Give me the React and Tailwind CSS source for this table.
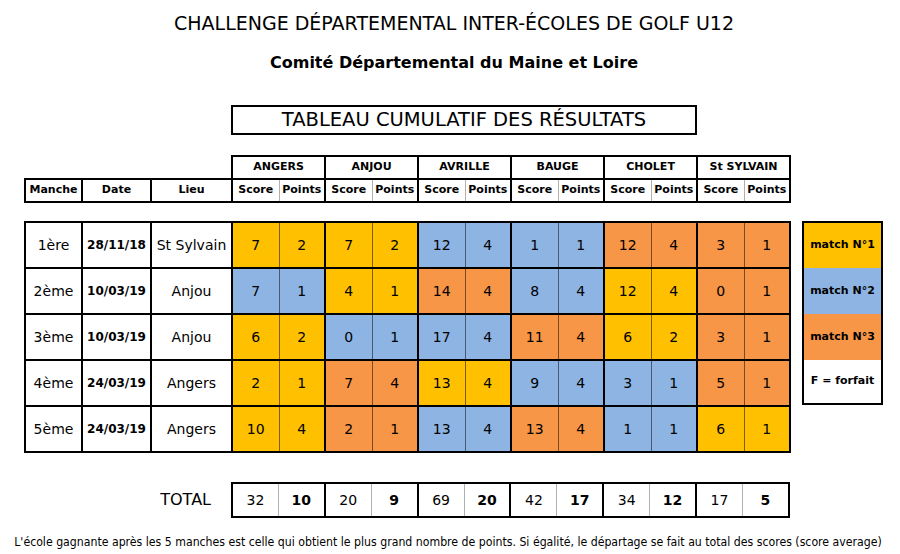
import React from "react";

const Y = "bg-[#FFC000]";
const B = "bg-[#8DB4E2]";
const O = "bg-[#F79646]";

const schools = ["ANGERS", "ANJOU", "AVRILLE", "BAUGE", "CHOLET", "St SYLVAIN"];

const rows = [
  { m: "1ère", d: "28/11/18", l: "St Sylvain", c: [[7, 2, Y], [7, 2, Y], [12, 4, B], [1, 1, B], [12, 4, O], [3, 1, O]] },
  { m: "2ème", d: "10/03/19", l: "Anjou", c: [[7, 1, B], [4, 1, Y], [14, 4, O], [8, 4, B], [12, 4, Y], [0, 1, O]] },
  { m: "3ème", d: "10/03/19", l: "Anjou", c: [[6, 2, Y], [0, 1, B], [17, 4, B], [11, 4, O], [6, 2, Y], [3, 1, O]] },
  { m: "4ème", d: "24/03/19", l: "Angers", c: [[2, 1, Y], [7, 4, O], [13, 4, Y], [9, 4, B], [3, 1, B], [5, 1, O]] },
  { m: "5ème", d: "24/03/19", l: "Angers", c: [[10, 4, Y], [2, 1, O], [13, 4, B], [13, 4, O], [1, 1, B], [6, 1, Y]] },
];

const totals = [[32, 10], [20, 9], [69, 20], [42, 17], [34, 12], [17, 5]];

function Cols() {
  return (
    <colgroup>
      <col className="w-[57px]" />
      <col className="w-[69px]" />
      <col className="w-[81px]" />
      {schools.map((s) => (
        <React.Fragment key={s}>
          <col className="w-[47px]" />
          <col className="w-[46px]" />
        </React.Fragment>
      ))}
    </colgroup>
  );
}

export default function App() {
  return (
    <div className="w-[900px] h-[554px] bg-white text-black flex flex-col font-['DejaVu_Sans',sans-serif] overflow-hidden">
      <div className="mt-[12px] h-[22px] text-center text-[19px] leading-[22px] pl-[8px]">
        CHALLENGE DÉPARTEMENTAL INTER-ÉCOLES DE GOLF U12
      </div>
      <div className="mt-[18px] h-[22px] text-center text-[16px] leading-[22px] font-bold pl-[8px]">
        Comité Départemental du Maine et Loire
      </div>
      <div className="mt-[31px] ml-[231px] w-[466px] h-[30px] border-2 border-black flex items-center justify-center text-[19.5px]">
        TABLEAU CUMULATIF DES RÉSULTATS
      </div>

      <table className="mt-[20px] ml-[24px] w-[766px] table-fixed border-collapse text-[11px] font-bold">
        <Cols />
        <tbody>
          <tr className="h-[23px]">
            <td colSpan={3}></td>
            {schools.map((s) => (
              <td key={s} colSpan={2} className="border-2 border-black text-center p-0">
                {s}
              </td>
            ))}
          </tr>
          <tr className="h-[23px]">
            <td className="border-2 border-black text-center p-0">Manche</td>
            <td className="border-2 border-black text-center p-0">Date</td>
            <td className="border-2 border-black text-center p-0">Lieu</td>
            {schools.map((s) => (
              <React.Fragment key={s}>
                <td className="border-2 border-r border-black border-r-[#b0b0b0] border-r-dotted text-center p-0">Score</td>
                <td className="border-2 border-l border-black border-l-[#b0b0b0] border-l-dotted text-center p-0">Points</td>
              </React.Fragment>
            ))}
          </tr>
        </tbody>
      </table>

      <div className="mt-[18px] flex items-start">
        <table className="ml-[24px] w-[766px] table-fixed border-collapse">
          <Cols />
          <tbody>
            {rows.map((r) => (
              <tr key={r.m} className="h-[46px]">
                <td className="border-2 border-black text-center p-0 text-[14px]">{r.m}</td>
                <td className="border-2 border-black text-center p-0 text-[12px] font-bold">{r.d}</td>
                <td className="border-2 border-black text-center p-0 text-[14px]">{r.l}</td>
                {r.c.map(([s, p, col], i) => (
                  <React.Fragment key={i}>
                    <td className={`border-2 border-r border-black border-r-black/50 text-center p-0 text-[14px] ${col}`}>{s}</td>
                    <td className={`border-2 border-l border-black border-l-black/50 text-center p-0 text-[14px] ${col}`}>{p}</td>
                  </React.Fragment>
                ))}
              </tr>
            ))}
          </tbody>
        </table>
        <div className="ml-[11px] w-[81px] border-2 border-black flex flex-col text-[11px] font-bold">
          <div className={`h-[45px] flex items-center justify-center ${Y}`}>match N°1</div>
          <div className={`h-[46px] flex items-center justify-center ${B}`}>match N°2</div>
          <div className={`h-[46px] flex items-center justify-center ${O}`}>match N°3</div>
          <div className="h-[43px] flex items-center justify-center bg-white">F = forfait</div>
        </div>
      </div>

      <div className="mt-[29px] flex items-center">
        <div className="w-[231px] text-right pr-[20px] text-[16px]">TOTAL</div>
        <table className="w-[559px] table-fixed border-collapse text-[14px]">
          <tbody>
            <tr className="h-[34px]">
              {totals.map(([s, p], i) => (
                <React.Fragment key={i}>
                  <td className="border-2 border-r border-black border-r-[#b0b0b0] border-r-dotted text-center p-0">{s}</td>
                  <td className="border-2 border-l border-black border-l-[#b0b0b0] border-l-dotted text-center p-0 font-bold">{p}</td>
                </React.Fragment>
              ))}
            </tr>
          </tbody>
        </table>
      </div>

      <div className="mt-[15px] text-center text-[12.2px] font-['DejaVu_Sans_Condensed',sans-serif] pr-[4px]">
        L'école gagnante après les 5 manches est celle qui obtient le plus grand nombre de points. Si égalité, le départage se fait au total des scores (score average)
      </div>
    </div>
  );
}
